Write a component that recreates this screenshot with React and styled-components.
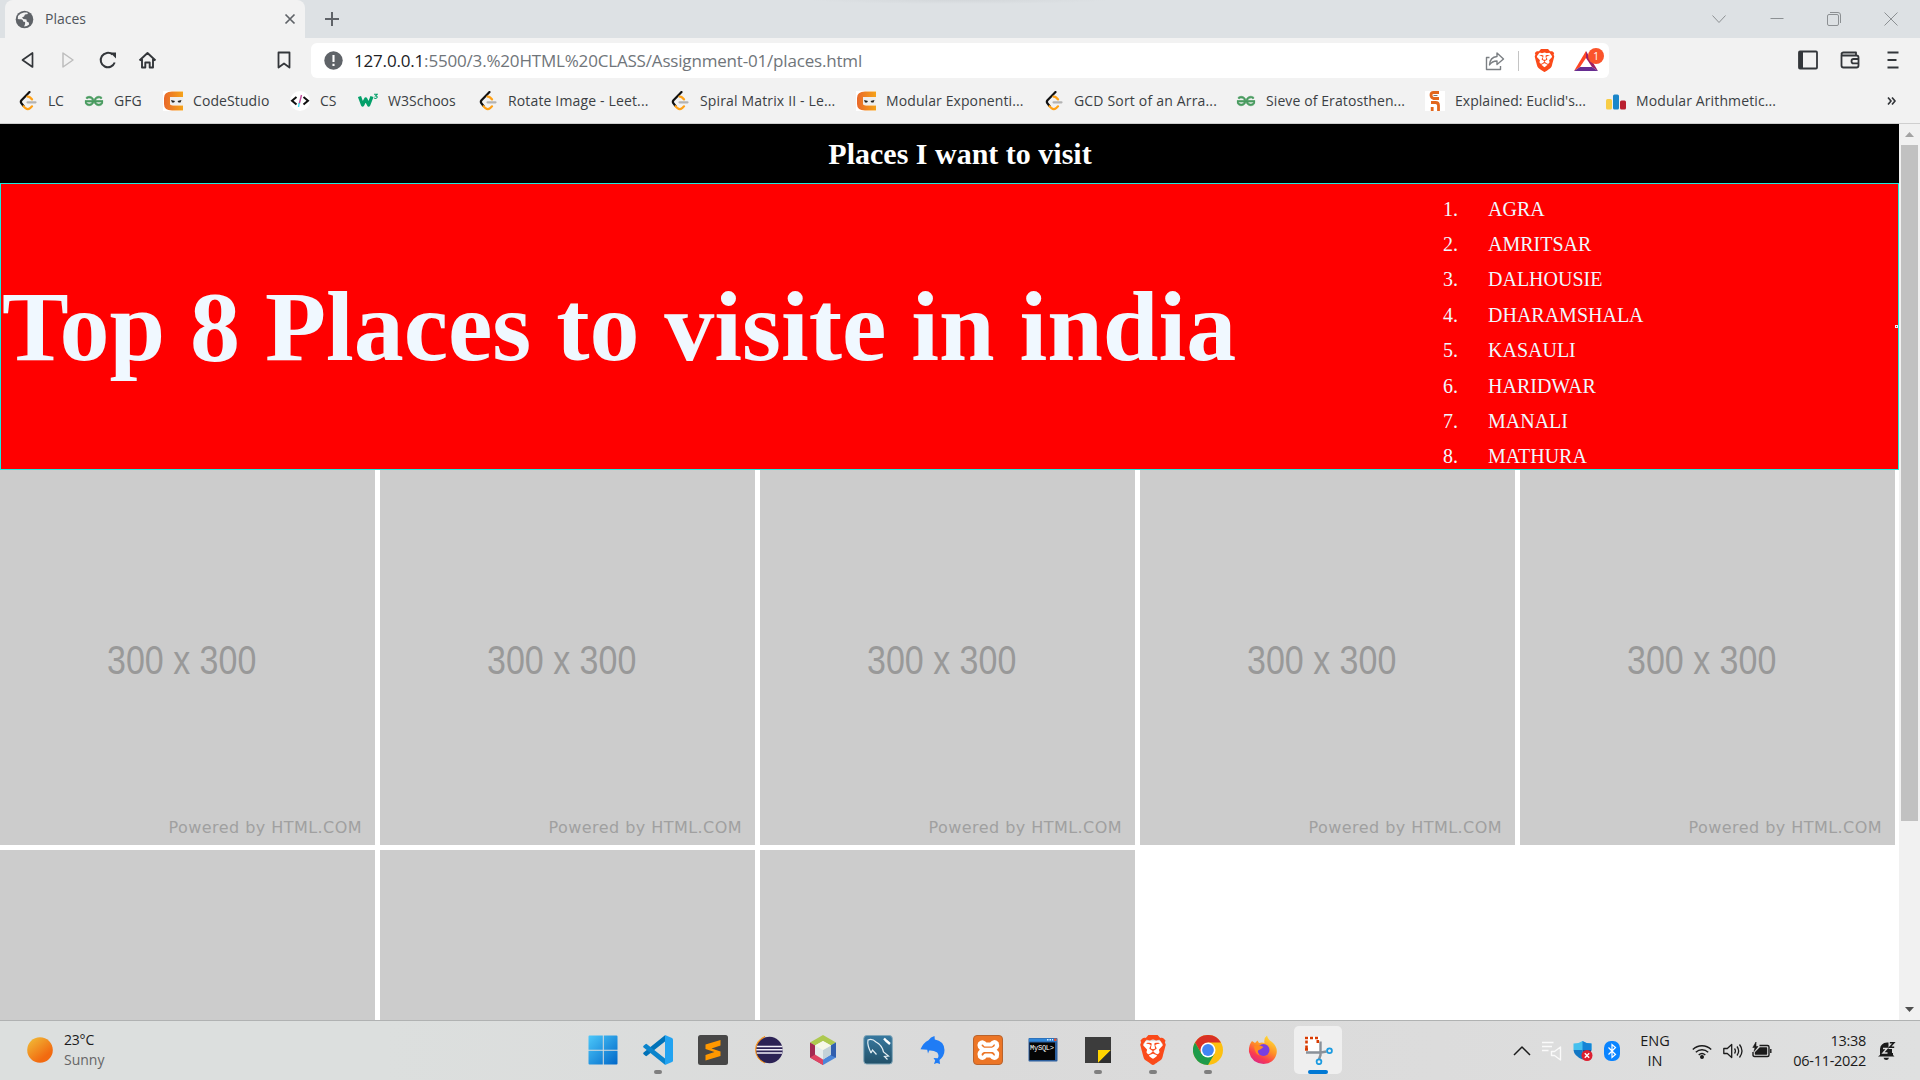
import React from "react";
import styled, { createGlobalStyle } from "styled-components";
import { SiBrave, SiGeeksforgeeks } from "react-icons/si";

const GlobalStyle = createGlobalStyle`
  *, *::before, *::after { box-sizing: border-box; }
  body { margin: 0; overflow: hidden; background: #fff; }
`;

const ui = `"Open Sans", "Noto Sans", sans-serif`;
const serif = `"Liberation Serif", "Times New Roman", serif`;

const Screen = styled.div`
  width: 1920px;
  height: 1080px;
  display: flex;
  flex-direction: column;
  overflow: hidden;
  font-family: ${ui};
`;

/* ---------- tab strip ---------- */
const TabStrip = styled.div`
  height: 38px;
  flex: none;
  display: flex;
  padding-left: 5px;
  background: radial-gradient(ellipse 150px 4px at 960px 0, #d3d7da 0%, #dde1e4 100%);
`;
const Tab = styled.div`
  width: 300px;
  height: 38px;
  display: flex;
  align-items: center;
  padding: 0 8px 0 10px;
  border-radius: 8px 8px 0 0;
  background: #f2f2f2;
`;
const TabTitle = styled.span`
  flex: 1;
  margin: -2px 0 0 11px;
  font-size: 14px;
  letter-spacing: 0;
  color: #50555b;
`;
const NewTab = styled.div`
  width: 54px;
  display: flex;
  align-items: center;
  justify-content: center;
`;
const WindowButtons = styled.div`
  margin-left: auto;
  display: flex;
`;
const WindowButton = styled.div`
  width: 57.3px;
  display: flex;
  align-items: center;
  justify-content: center;
`;

/* ---------- toolbar ---------- */
const Toolbar = styled.div`
  height: 45px;
  flex: none;
  display: flex;
  padding: 5px 0 5px 8px;
  background: #f2f2f2;
`;
const ToolButton = styled.div`
  width: ${(p) => p.$w || 40}px;
  height: 34px;
  display: flex;
  align-items: center;
  justify-content: center;
`;
const Spacer = styled.div`
  flex: 1;
`;
const NavGroup = styled.div`
  width: 303px;
  display: flex;
  padding-right: 7px;
`;
const AddressBar = styled.div`
  width: 1298px;
  height: 35px;
  display: flex;
  align-items: center;
  padding-left: 13px;
  border-radius: 6px;
  background: #fff;
`;
const Url = styled.span`
  flex: 1;
  margin-left: 11px;
  font-size: 17px;
  letter-spacing: -0.18px;
  color: #70757a;
  white-space: nowrap;
`;
const Host = styled.span`
  color: #202124;
`;
const Divider = styled.div`
  width: 1px;
  height: 20px;
  margin: 0 14px 0 13px;
  background: #c4c4c4;
`;
const RewardsIcon = styled.div`
  position: relative;
  width: 24px;
  height: 22px;
  margin: 0 11px 0 18px;
`;
const Badge = styled.span`
  position: absolute;
  left: 14px;
  top: -2px;
  width: 16px;
  height: 16px;
  border-radius: 50%;
  background: #fb542b;
  color: #fff;
  font-size: 10px;
  line-height: 16px;
  text-align: center;
`;

/* ---------- bookmarks ---------- */
const Bookmarks = styled.div`
  height: 41px;
  flex: none;
  display: flex;
  padding: 0 0 5px 18px;
  border-bottom: 1px solid #cfcfcf;
  background: #f2f2f2;
`;
const Bookmark = styled.div`
  width: ${(p) => p.$w}px;
  display: flex;
  align-items: center;
  gap: 10px;
  font-size: 14px;
  letter-spacing: ${(p) => p.$ls}px;
  color: #3b3f44;
  white-space: nowrap;
  svg { flex: none; }
`;
const More = styled.div`
  margin-left: auto;
  padding-right: 24px;
  display: flex;
  align-items: center;
`;

/* ---------- page ---------- */
const Viewport = styled.div`
  height: 896px;
  flex: none;
  display: flex;
`;
const Page = styled.main`
  width: 1899px;
  height: 896px;
  overflow: hidden;
  background: #fff;
`;
const PageTitle = styled.h1`
  height: 59px;
  margin: 0;
  padding-left: 21px;
  background: #000;
  color: #fff;
  font: bold 30px/60px ${serif};
  text-align: center;
`;
const Hero = styled.section`
  height: 287px;
  display: flex;
  border: 1px solid #1de9dc;
  background: red;
  color: aliceblue;
  font-family: ${serif};
`;
const HeroTitle = styled.h2`
  width: 1442px;
  margin: 0;
  padding-left: 1px;
  font-size: 100px;
  line-height: 285px;
  letter-spacing: -0.04px;
  white-space: nowrap;
`;
const PlaceList = styled.ol`
  margin: 0;
  padding: 7.5px 0 0;
  list-style: none;
  font-size: 20px;
  line-height: 35.4px;
`;
const PlaceItem = styled.li`
  display: grid;
  grid-template-columns: 45px auto;
`;
const Handle = styled.div`
  width: 3px;
  height: 3px;
  margin: 141px 0 0 auto;
  border: 1px solid #eef;
`;
const Gallery = styled.section`
  display: grid;
  grid-template-columns: repeat(5, 375px);
  grid-auto-rows: 375px;
  gap: 5px;
`;
const Tile = styled.figure`
  margin: 0;
  display: flex;
  flex-direction: column;
  background: #ccc;
  color: #999;
`;
const TileSize = styled.div`
  align-self: flex-start;
  margin: 165px 0 0 107px;
  font: 40px/50px "Liberation Sans", Arial, sans-serif;
  transform: scaleX(0.85);
  transform-origin: left center;
  white-space: nowrap;
`;
const TileCredit = styled.figcaption`
  margin: 132px 13px 0 auto;
  font: 16px/22px "DejaVu Sans", sans-serif;
  letter-spacing: 0.45px;
  color: #a0a0a0;
`;
const ScrollBar = styled.div`
  width: 21px;
  display: flex;
  flex-direction: column;
  align-items: center;
  background: #f1f1f1;
`;
const ScrollArrow = styled.div`
  height: 21px;
  display: flex;
  align-items: center;
`;
const ScrollThumb = styled.div`
  width: 17px;
  height: 676px;
  background: #c1c1c1;
`;

/* ---------- taskbar ---------- */
const Taskbar = styled.footer`
  height: 60px;
  flex: none;
  display: flex;
  border-top: 1px solid #b0b2b2;
  background: linear-gradient(90deg, #dcdfde 0, #dcdfde 20%, #dadada 50%, #dcdcdc 75%, #dfe0e0 100%);
`;
const Weather = styled.div`
  width: 575px;
  display: flex;
  align-items: center;
  gap: 11px;
  padding-left: 27px;
  padding-bottom: 2px;
`;
const WeatherText = styled.div`
  font-size: 14px;
  line-height: 20px;
  color: #666;
`;
const Temp = styled.div`
  color: #1b1b1b;
  letter-spacing: -0.2px;
`;
const Apps = styled.div`
  display: flex;
`;
const AppButton = styled.div`
  width: 55px;
  height: 59px;
  display: flex;
  flex-direction: column;
  align-items: center;
  padding-top: 5px;
`;
const AppFace = styled.div`
  width: 48px;
  height: 48px;
  display: flex;
  flex-direction: column;
  align-items: center;
  padding-top: 9px;
  border-radius: 5px;
  background: ${(p) => (p.$active ? "#efefef" : "transparent")};
`;
const Indicator = styled.div`
  width: ${(p) => (p.$active ? 20 : 8)}px;
  height: 4px;
  margin-top: 5px;
  border-radius: 2px;
  background: ${(p) => (p.$active ? "#0078d4" : p.$open ? "#7f7f7f" : "transparent")};
`;
const Tray = styled.div`
  margin-left: auto;
  display: flex;
  align-items: center;
  padding-right: 13px;
  color: #1b1b1b;
`;
const TrayIcon = styled.div`
  width: ${(p) => p.$w}px;
  display: flex;
  align-items: center;
  justify-content: center;
`;
const TrayText = styled.div`
  width: ${(p) => p.$w}px;
  font-size: 14.5px;
  line-height: 20px;
  letter-spacing: ${(p) => p.$ls || 0}px;
  text-align: ${(p) => p.$align};
`;

/* ---------- icons ---------- */
const Stroke = ({ w = 20, h = w, vb, c = "#33363a", sw = 2, children }) => (
  <svg width={w} height={h} viewBox={vb || `0 0 ${w} ${h}`} fill="none" stroke={c} strokeWidth={sw} strokeLinejoin="round">
    {children}
  </svg>
);
const Globe = () => (
  <svg width="19" height="19" viewBox="0 0 19 19">
    <circle cx="9.5" cy="9.5" r="8.8" fill="#5f6368" />
    <path d="M9 2.5Q5 3 3 6L2.8 9q2 .3 3.5.2 2 .2 1.800 2.300l2 .5v2l-1 2.500q3 0 5-2l-.3-2-2-1-.3-2-3-.5-1.500-1.500 2-1 1-2 3-.5-.8-1.500z" fill="#f2f2f2" />
  </svg>
);
const Leet = () => (
  <svg width="20" height="20" viewBox="0 0 20 20" fill="none" strokeWidth="2.200" strokeLinecap="round">
    <path d="M11.500 1 3.500 9.200q-1.300 1.500 0 3.200l2 2.600" stroke="#111" />
    <path d="M5.500 15.200l2 2q2.300 1.800 4.600 0l1.900-1.900M9.500 5.600q1.400-.2 2.500.8l2 2" stroke="#ffa116" />
    <path d="M9.500 11.300h8" stroke="#b3b3b3" />
  </svg>
);
const Ninja = () => (
  <svg width="20" height="20" viewBox="0 0 20 20">
    <defs>
      <linearGradient id="ninja"><stop offset="0" stopColor="#e9682a" /><stop offset="1" stopColor="#f5a31a" /></linearGradient>
    </defs>
    <path d="M0 0h20v20H0z" fill="#fff" />
    <path d="M20 .5H9Q1 .5 1 7v6q0 6.500 8 6.500h11v-5H10q-3 0-3-2.500V7.500Q7 6 9 6h11z" fill="url(#ninja)" />
    <path d="M7 6h13v8H9q-2 0-2-2z" fill="#eee" />
    <path d="M8 9l4 1-1 1.500H9zM18.500 9l-4 1 1 1.500h2z" fill="#222" />
  </svg>
);
const CodeTag = () => (
  <svg width="20" height="20" viewBox="0 0 20 20" fill="none" stroke="#111" strokeWidth="2">
    <circle cx="10" cy="10" r="10" fill="#fff" stroke="none" />
    <path d="M6.500 6 2 9.700l4.500 3.800M13.500 6 18 9.700l-4.500 3.800" />
    <path d="M11.500 4 9.200 13" stroke="#c04a9a" strokeWidth="1.400" />
    <path d="M9.200 12 8.500 16" stroke="#3ddcf0" strokeWidth="1.400" />
  </svg>
);
const W3 = () => (
  <svg width="20" height="20" viewBox="0 0 20 20" fill="none" stroke="#04a06a">
    <path d="M1.500 5.500 4.600 14 7.700 8l3 6L14 5.500" strokeWidth="3.300" strokeLinejoin="round" />
    <path d="M16 3.200h3.200L17.500 5q2 .1 1.600 1.600-.8 1.400-3.100.5" strokeWidth="1.100" />
  </svg>
);
const Gfg = () => (
  <svg width="20" height="20" viewBox="0 0 24 24">
    <SiGeeksforgeeks x="1" y="1" size={22} color="#4a9c60" stroke="#4a9c60" strokeWidth=".9" />
  </svg>
);
const ScienceOrange = () => (
  <svg width="20" height="20" viewBox="0 0 20 20" fill="none" stroke="#e2671d" strokeWidth="2.800">
    <path d="M0 0h20v20H0z" fill="#fff" stroke="none" />
    <path d="M14 1.500H8.500Q6 1.500 6 4t2.500 3.500H14M6 11.500h4.500q3 0 3 3V20M7.200 16v4" />
    <path d="M8.500 4.500h4" strokeWidth="1" stroke="#777" />
  </svg>
);
const Bars = () => (
  <svg width="20" height="20" viewBox="0 0 20 20">
    <rect y="8" width="6" height="10.500" rx="1.500" fill="#f8cd46" />
    <rect x="7" y="3.500" width="6" height="15" rx="1.500" fill="#1b86c9" />
    <rect x="14" y="9.500" width="6" height="9" rx="1.500" fill="#ba2030" />
  </svg>
);

/* name, icon, slot width, letter spacing */
const bookmarks = [
  ["LC", Leet, 66, -0.2],
  ["GFG", Gfg, 79, 0],
  ["CodeStudio", Ninja, 127, 0.1],
  ["CS", CodeTag, 68, 0],
  ["W3Schoos", W3, 120, 0.05],
  ["Rotate Image - Leet...", Leet, 192, 0.15],
  ["Spiral Matrix II - Le...", Leet, 186, 0.15],
  ["Modular Exponenti...", Ninja, 188, 0.1],
  ["GCD Sort of an Arra...", Leet, 192, 0.18],
  ["Sieve of Eratosthen...", Gfg, 189, 0.1],
  ["Explained: Euclid's...", ScienceOrange, 181, 0.03],
  ["Modular Arithmetic...", Bars, 200, 0.12],
];

const Lion = ({ size, back }) => (
  <svg width={size} height={size} viewBox="0 0 24 24">
    {back && <path d="M6 5h12l2 4-3 10-5 3-5-3L4 9z" fill="#fff" />}
    <SiBrave x="0" y="0" size={24} color="#fb4a1a" />
  </svg>
);
const Windows = () => (
  <svg width="30" height="30" viewBox="0 0 30 30">
    <defs>
      <linearGradient id="win" x2="1" y2="1"><stop offset="0" stopColor="#4cc8fa" /><stop offset="1" stopColor="#0067c8" /></linearGradient>
    </defs>
    <path d="M1.500 .5H14.800v14.200H.5V1.500q0-1 1-1zM15.800.5h12.700q1 0 1 1v13.200H15.800zM.5 15.700h14.300v13.800H1.500q-1 0-1-1zM15.800 15.700h13.700v12.800q0 1-1 1H15.800z" fill="url(#win)" />
  </svg>
);
const VsCode = () => (
  <svg width="30" height="30" viewBox="0 0 30 30">
    <path d="M22 6.500 4 20.800q-.8.700-1.600 0L.6 19.200q-.9-.9 0-1.700L22 .2z" fill="#0072b8" />
    <path d="M22 23.500 4 9.200q-.8-.7-1.600 0L.6 10.800q-.9.900 0 1.700L22 29.800z" fill="#0a84cc" />
    <path d="M22 0l7 3q1 .5 1 1.500v21q0 1-1 1.500l-7 3z" fill="#22a3f1" />
  </svg>
);
const Sublime = () => (
  <svg width="30" height="30" viewBox="0 0 30 30">
    <rect width="30" height="30" rx="2.500" fill="#474747" />
    <path d="M22.500 5v5.500l-9 3 9 3v4.500l-15 4.500V20l9-3-9-3V9.500z" fill="#ff9800" />
  </svg>
);
const Eclipse = () => (
  <svg width="30" height="30" viewBox="0 0 30 30">
    <path d="M12 1.500A14 14 0 0 0 12 28 16 16 0 0 1 12 1.500z" fill="#f7941e" stroke="#f7941e" strokeWidth="1" />
    <circle cx="16.500" cy="15" r="13.200" fill="#2c2255" />
    <path d="M3.800 11.500h25.400M3.300 14.800h26.400M3.800 18h25.400" stroke="#f1eef8" strokeWidth="1.600" />
  </svg>
);
const NetBeans = () => (
  <svg width="30" height="30" viewBox="0 0 30 30">
    <path d="M15 0 28 7.500 15 15 2 7.500z" fill="#adc94f" />
    <path d="M2 7.500 15 15v15L2 22.500z" fill="#a32a52" />
    <path d="M2 22.500l13-7.500v15z" fill="#df4463" />
    <path d="M28 7.500V22.500L15 30V15z" fill="#4a86d8" />
    <path d="M28 7.500l-5 3v10l5 2z" fill="#315fae" />
    <path d="M15 6l8 4.500v9L15 24.500 7 19.500v-9z" fill="#e6ecec" />
    <path d="M15 15l8-4.500v9l-8 5z" fill="#c3d2d8" />
    <path d="M15 6l8 4.500-8 4.500-8-4.500z" fill="#f6f8e8" />
  </svg>
);
const Workbench = () => (
  <svg width="30" height="30" viewBox="0 0 30 30">
    <defs><linearGradient id="wb" x2="0" y2="1"><stop offset="0" stopColor="#3879a0" /><stop offset="1" stopColor="#225169" /></linearGradient></defs>
    <rect x=".8" y=".5" width="28.500" height="28.500" rx="3" fill="url(#wb)" stroke="#7fa5b8" />
    <path d="M8 18Q4 10 5 5q4-2 8 2 6 3 7.500 10l5 4-4 .5 3 3M8 18l1.500-3 4 4.500" fill="none" stroke="#e5eff4" strokeWidth="1.200" />
    <path d="M21 3.500l2.500 2.500 3.500 3" fill="none" stroke="#fff" strokeWidth="2.400" />
  </svg>
);
const Dolphin = () => (
  <svg width="30" height="30" viewBox="0 0 30 30">
    <path d="M2.500 14.200Q5 8 10.500 5.200 12.500 2 16.500 1l.3 3.600Q26 6 26.500 15q0 6-5 10l.6 4-3.100-1-3 1 1.200-3.500-1.700-2.500 4.200.3q1.800-2.800-.5-5.800-4-2.500-8-2L10 18.500l-.8-3.700z" fill="#1f7cf5" />
  </svg>
);
const Xampp = () => (
  <svg width="30" height="30" viewBox="0 0 30 30">
    <rect x=".5" y=".5" width="29" height="29" rx="3.500" fill="#ec7526" stroke="#b9632c" />
    <g fill="none" stroke="#fff" strokeWidth="4.200" strokeLinecap="round" strokeLinejoin="round">
      <path d="M10.500 14.800Q5 12 7 8.500q3-2.500 5.500 1l5.500 0q3-4 5.700-1 1.500 4-4 6.300M10.500 14.800Q5 17.500 7 21.500q3 3 5.500-1l5.500 0q3 4 5.700 1 1.500-4.500-4-6.700z" />
    </g>
  </svg>
);
const MySqlShell = () => (
  <svg width="30" height="30" viewBox="0 0 30 30">
    <rect x=".5" y="3" width="29" height="23.500" rx="1" fill="#2c5f9e" />
    <path d="M1 3.500h28v3H1z" fill="#2f86d9" />
    <path d="M19 4.800h6" stroke="#d9ecff" strokeWidth="1.600" strokeDasharray="1.500 1" />
    <path d="M26 3.500h2.500v2.500H26z" fill="#e0532f" />
    <path d="M1.500 7.500h25.500V25H1.500z" fill="#050505" />
    <text x="2" y="15" fontSize="7" fontFamily="Liberation Mono, monospace" fill="#fff" textLength="24">MySQL&gt;</text>
  </svg>
);
const Notes = () => (
  <svg width="30" height="30" viewBox="0 0 30 30">
    <path d="M2 2h26v26H2z" fill="#3c3c3c" />
    <path d="M15 15h13L15 28z" fill="#ffd400" />
    <path d="M28 15v13H15z" fill="#2e2e2e" />
  </svg>
);
const Chrome = () => (
  <svg width="30" height="30" viewBox="0 0 30 30">
    <circle cx="15" cy="15" r="15" fill="#fdc010" />
    <path d="M2 7.500A15 15 0 0 1 28 7.500H15L8.500 18.800z" fill="#d93025" />
    <path d="M2 7.500A15 15 0 0 0 15 30l6.500-11.300H8.500z" fill="#1e9b4b" />
    <circle cx="15" cy="15" r="7.500" fill="#fff" />
    <circle cx="15" cy="15" r="5.900" fill="#4285f4" />
  </svg>
);
const Firefox = () => (
  <svg width="30" height="30" viewBox="0 0 30 30">
    <defs>
      <linearGradient id="fox" x1=".8" y1="0" x2=".25" y2="1"><stop offset="0" stopColor="#ffe83a" /><stop offset=".45" stopColor="#ff9127" /><stop offset=".75" stopColor="#fb3c4f" /><stop offset="1" stopColor="#d6258e" /></linearGradient>
    </defs>
    <path d="M4 6l3 2 2.500-2.500L11 8q3-1 5.500 0Q15.500 3 19 .5q1 4 5 6.500 6 5 4.500 12Q26 28.500 15.500 29 3.500 28 1 17 .5 10 4 6z" fill="url(#fox)" />
    <circle cx="15.500" cy="15" r="6" fill="#7a3ee0" />
    <path d="M6 11q5-2 9.500 1l-2.500 2-3 1.500q-1 3 2.500 5Q7 20 6 11z" fill="#ff8a20" />
  </svg>
);
const Snip = () => (
  <svg width="30" height="30" viewBox="0 0 30 30" fill="none">
    <path d="M2 1.500h15v15H2z" fill="#fff" />
    <path d="M2 3h14M3.500 5.500V15M2 14.500h5" stroke="#d83b01" strokeWidth="2.600" strokeDasharray="3 2" />
    <path d="M14.800 5v3" stroke="#d83b01" strokeWidth="2.600" />
    <path d="M17.500 6.500V20l-1.500 4.500M3 17.500h15l5.500-1" stroke="#8a9199" strokeWidth="2.400" />
    <circle cx="16" cy="26.800" r="2.400" stroke="#1c9be0" strokeWidth="1.800" />
    <circle cx="26.500" cy="15.800" r="2.400" stroke="#1c9be0" strokeWidth="1.800" />
  </svg>
);

const apps = [
  { Icon: Windows }, { Icon: VsCode, open: true }, { Icon: Sublime }, { Icon: Eclipse }, { Icon: NetBeans },
  { Icon: Workbench }, { Icon: Dolphin }, { Icon: Xampp }, { Icon: MySqlShell }, { Icon: Notes, open: true },
  { Icon: () => <Lion size={30} back />, open: true }, { Icon: Chrome, open: true }, { Icon: Firefox }, { Icon: Snip, active: true },
];

const places = ["AGRA", "AMRITSAR", "DALHOUSIE", "DHARAMSHALA", "KASAULI", "HARIDWAR", "MANALI", "MATHURA"];
const tilesPerRow = 5;

export default function App() {
  return (
    <Screen>
      <GlobalStyle />
      <TabStrip>
        <Tab>
          <Globe />
          <TabTitle>Places</TabTitle>
          <Stroke w={14} c="#5f6368" sw={1.7}><path d="M2.500 2.500l9 9M11.500 2.500l-9 9" /></Stroke>
        </Tab>
        <NewTab><Stroke w={16} c="#5f6368" sw={2}><path d="M8 1v14M1 8h14" /></Stroke></NewTab>
        <WindowButtons>
          <WindowButton><Stroke w={14} c="#8c9093" sw={1}><path d="M.5 3.500l6.500 7 6.500-7" /></Stroke></WindowButton>
          <WindowButton><Stroke w={14} c="#8c9093" sw={1}><path d="M.5 6.500h13" /></Stroke></WindowButton>
          <WindowButton>
            <Stroke w={14} c="#8c9093" sw={1}><rect x=".5" y="2.500" width="11" height="11" rx="1.500" /><path d="M3 .5h8q2.500 0 2.500 2.500v8" /></Stroke>
          </WindowButton>
          <WindowButton><Stroke w={14} c="#8c9093" sw={1}><path d="M.5.5l13 13M13.500.5l-13 13" /></Stroke></WindowButton>
        </WindowButtons>
      </TabStrip>

      <Toolbar>
        <NavGroup>
          <ToolButton><Stroke w={20} sw={1.700}><path d="M14.500 3v14L4.500 10z" /></Stroke></ToolButton>
          <ToolButton><Stroke w={20} sw={1.500} c="#bdbdbd"><path d="M5 3v14l10-7z" /></Stroke></ToolButton>
          <ToolButton>
            <Stroke w={20} sw={2}><path d="M16.700 12.500A7.200 7.200 0 1 1 14.500 4.500" /><path d="M12 2.500h6v6z" fill="#33363a" stroke="none" /></Stroke>
          </ToolButton>
          <ToolButton>
            <Stroke w={20} sw={1.900}><path d="M1.500 10.500 9.500 3l8 7.500M4 9v8.500h3.300v-5h4.400v5h3.300V9" /></Stroke>
          </ToolButton>
          <Spacer />
          <ToolButton><Stroke w={20} sw={1.800}><path d="M4.500 2.500h11v15L10 13.500l-5.500 4z" /></Stroke></ToolButton>
        </NavGroup>
        <AddressBar>
          <svg width="19" height="19" viewBox="0 0 19 19">
            <circle cx="9.500" cy="9.500" r="9.200" fill="#5f6368" />
            <path d="M9.500 4v7M9.500 12.800V15" stroke="#fff" strokeWidth="2.100" />
          </svg>
          <Url><Host>127.0.0.1</Host>:5500/3.%20HTML%20CLASS/Assignment-01/places.html</Url>
          <Stroke w={20} c="#7b7f83" sw={1.400}>
            <path d="M4.500 6.500H1.500v12h14v-3.500M12 2l6.500 6L12 13.500v-3.500q-5 0-7.500 4 .5-8 7.500-8.500z" />
          </Stroke>
          <Divider />
          <Lion size={23} />
          <RewardsIcon>
            <svg width="24" height="22" viewBox="0 0 24 22">
              <path d="M12 1 0 21l6-4 6-9z" fill="#ff4724" />
              <path d="M12 1l12 20-6-4-6-9z" fill="#9e1f63" />
              <path d="M0 21h24l-6-4H6z" fill="#662d91" />
            </svg>
            <Badge>1</Badge>
          </RewardsIcon>
        </AddressBar>
        <Spacer />
        <ToolButton $w={43}>
          <Stroke w={20} sw={1.800}><rect x="1" y="1.500" width="18" height="17" rx="1" /><path d="M3 2v16" strokeWidth="4" /></Stroke>
        </ToolButton>
        <ToolButton $w={42}>
          <Stroke w={20} sw={1.800}>
            <path d="M1.500 5v10.500q0 2 2 2h13q2 0 2-2v-8q0-2-2-2h-13Q1.500 5.500 1.500 4t2-1.500H16v3M18.500 9h-5q-2 0-2 2.200t2 2.200h5" />
          </Stroke>
        </ToolButton>
        <ToolButton $w={43}>
          <Stroke w={20} sw={1.800}><path d="M4.500 2.500h11M4.500 10h9M4.500 17.500h11" /></Stroke>
        </ToolButton>
        <ToolButton $w={6} />
      </Toolbar>

      <Bookmarks>
        {bookmarks.map(([name, Icon, w, ls]) => (
          <Bookmark key={name} $w={w} $ls={ls}><Icon /><span>{name}</span></Bookmark>
        ))}
        <More><Stroke w={9} h={10} sw={1.700}><path d="M1 1.500l3 3.500-3 3.500M5 1.500l3 3.500-3 3.500" /></Stroke></More>
      </Bookmarks>

      <Viewport>
        <Page>
          <PageTitle>Places I want to visit</PageTitle>
          <Hero>
            <HeroTitle>Top 8 Places to visite in india</HeroTitle>
            <PlaceList>
              {places.map((place, i) => (
                <PlaceItem key={place}><span>{i + 1}.</span><span>{place}</span></PlaceItem>
              ))}
            </PlaceList>
            <Handle />
          </Hero>
          <Gallery>
            {places.map((place, i) => (
              <Tile key={place}>
                {i < tilesPerRow && (
                  <>
                    <TileSize>300 x 300</TileSize>
                    <TileCredit>Powered by HTML.COM</TileCredit>
                  </>
                )}
              </Tile>
            ))}
          </Gallery>
        </Page>
        <ScrollBar>
          <ScrollArrow><svg width="9" height="5" viewBox="0 0 9 5"><path d="M4.500 0 9 5H0z" fill="#a3a3a3" /></svg></ScrollArrow>
          <ScrollThumb />
          <Spacer />
          <ScrollArrow><svg width="9" height="5" viewBox="0 0 9 5"><path d="M0 0h9L4.500 5z" fill="#505050" /></svg></ScrollArrow>
        </ScrollBar>
      </Viewport>

      <Taskbar>
        <Weather>
          <svg width="26" height="26" viewBox="0 0 26 26">
            <defs><linearGradient id="sun" x2=".8" y2="1"><stop offset="0" stopColor="#f0c23a" /><stop offset=".8" stopColor="#f26a10" /></linearGradient></defs>
            <circle cx="13" cy="13" r="12.800" fill="url(#sun)" />
          </svg>
          <WeatherText><Temp>23°C</Temp>Sunny</WeatherText>
        </Weather>
        <Apps>
          {apps.map(({ Icon, open, active }, i) => (
            <AppButton key={i}>
              <AppFace $active={active}>
                <Icon />
                <Indicator $open={open} $active={active} />
              </AppFace>
            </AppButton>
          ))}
        </Apps>
        <Tray>
          <TrayIcon $w={32}><Stroke w={18} h={10} c="#1b1b1b" sw={1.500}><path d="M1 9l8-8 8 8" /></Stroke></TrayIcon>
          <TrayIcon $w={28}>
            <Stroke w={20} c="#fafafa" sw={1.400}><path d="M0 1.500h11.500M0 5.500h10M0 9.500h6.500M9.500 10.500h3L18.500 6v13l-6-4.500h-3z" /></Stroke>
          </TrayIcon>
          <TrayIcon $w={33}>
            <svg width="20" height="20" viewBox="0 0 20 20">
              <path d="M9.500 0Q13 2.500 18.500 2.500V9H.5V2.500Q6 2.500 9.500 0z" fill="#45c0ee" />
              <path d="M9.500 0Q13 2.500 18.500 2.500V9h-9z" fill="#1484d6" />
              <path d="M.5 9h9v9.500Q1 15 .5 9z" fill="#1277c4" />
              <path d="M9.500 9h9q-1 6-9 9.500z" fill="#0a539a" />
              <circle cx="14" cy="14.500" r="5.500" fill="#dd1f30" />
              <path d="M11.800 12.300l4.400 4.400M16.200 12.300l-4.400 4.400" stroke="#fff" strokeWidth="1.400" />
            </svg>
          </TrayIcon>
          <TrayIcon $w={26}>
            <svg width="16" height="20" viewBox="0 0 16 20">
              <rect width="16" height="20" rx="7" fill="#0a84ff" />
              <path d="M4.500 6.500l7 7L8 16.500v-13l3.500 3-7 7" fill="none" stroke="#fff" strokeWidth="1.200" />
            </svg>
          </TrayIcon>
          <TrayText $w={60} $align="center">ENG<br />IN</TrayText>
          <TrayIcon $w={34}>
            <Stroke w={20} h={16} c="#1b1b1b" sw={1.400}>
              <path d="M.8 6.500a13 13 0 0 1 18.400 0M3.800 9.300a9 9 0 0 1 12.400 0M6.700 12a5 5 0 0 1 6.600 0" /><circle cx="10" cy="14" r="1.300" fill="#1b1b1b" />
            </Stroke>
          </TrayIcon>
          <TrayIcon $w={28}>
            <Stroke w={20} h={16} c="#1b1b1b" sw={1.300}>
              <path d="M.8 5.500h3.500L8.700 1.500v13L4.300 10.500H.8zM11.500 5.500q1.800 2.500 0 5M14 3.500q3.300 4.500 0 9M16.500 1.500q5 6.500 0 13" />
            </Stroke>
          </TrayIcon>
          <TrayIcon $w={30}>
            <Stroke w={20} h={17} c="#1b1b1b" sw={1.400}>
              <path d="M7.500 3.500h8q1.500 0 1.500 1.500v8q0 1.500-1.500 1.500h-13Q1 14.500 1 13V10M18.800 7v4" />
              <path d="M8 6h6.500v6h-11v-1.500z" fill="#1b1b1b" />
              <path d="M4 0 .8 5.500H3L2 9.500l4-5H4z" fill="#1b1b1b" strokeWidth=".6" />
            </Stroke>
          </TrayIcon>
          <TrayText $w={89} $align="right" $ls={-0.3}>13:38<br />06-11-2022</TrayText>
          <TrayIcon $w={41}>
            <svg width="20" height="20" viewBox="0 0 20 20">
              <path d="M3 14V8q.5-6 7-6.500h1.500V12H16v2l1.500 1.500H1z" fill="#1b1b1b" />
              <path d="M6.500 16.800h5.500q-.5 2.200-2.700 2.200t-2.800-2.200z" fill="#1b1b1b" />
              <path d="M6 7.500h4l-4 4.500h4.500" fill="none" stroke="#e0e0e0" strokeWidth="1.400" />
              <path d="M12.800 1.800h4l-4 4.500h4.400" fill="none" stroke="#1b1b1b" strokeWidth="1.600" />
              <path d="M11 8h4v6h-4z" fill="#1b1b1b" />
            </svg>
          </TrayIcon>
        </Tray>
      </Taskbar>
    </Screen>
  );
}
